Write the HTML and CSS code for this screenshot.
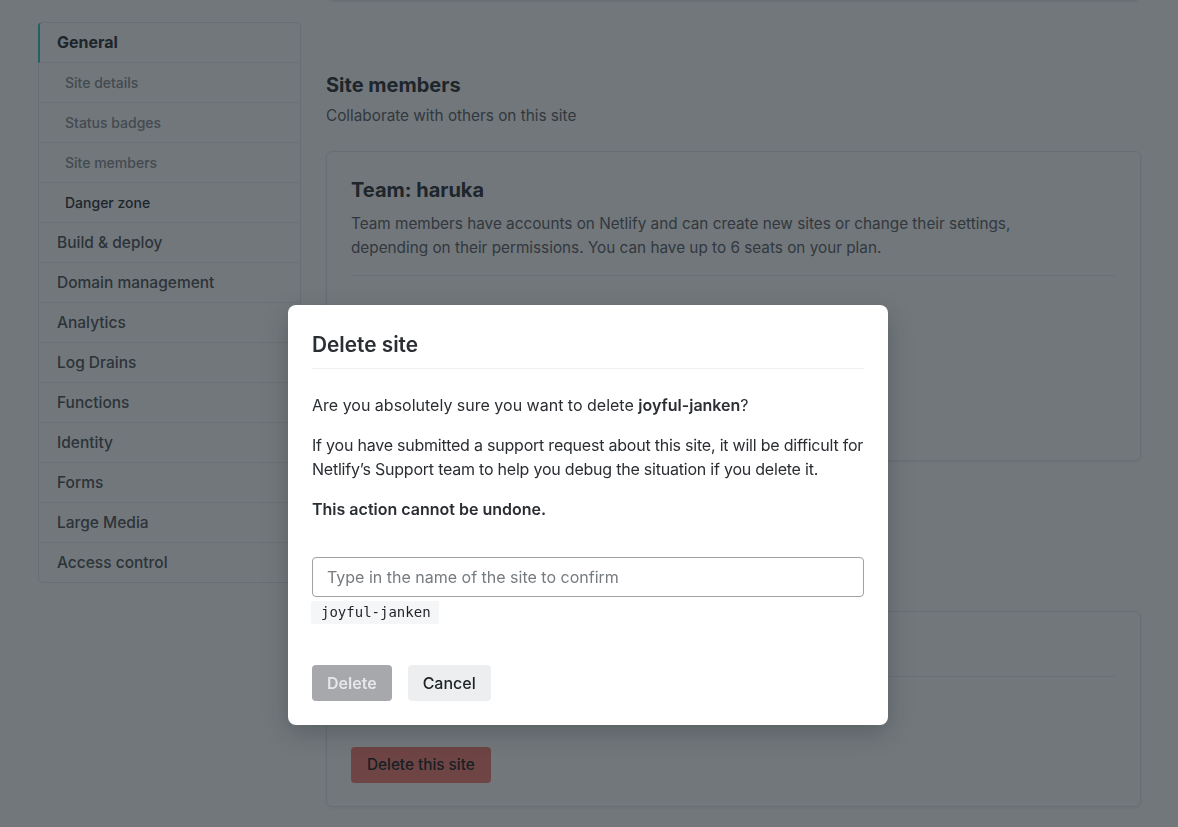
FILE: index.html
```html
<!DOCTYPE html>
<html lang="en">
<head>
<meta charset="utf-8">
<title>Site settings – Delete site</title>
<link rel="stylesheet" href="styles.css">
</head>
<body>
<div class="page">
  <aside class="sidebar">
    <nav class="nav">
      <div class="nav-item top active">General</div>
      <div class="nav-item sub">Site details</div>
      <div class="nav-item sub">Status badges</div>
      <div class="nav-item sub">Site members</div>
      <div class="nav-item sub current">Danger zone</div>
      <div class="nav-item top">Build &amp; deploy</div>
      <div class="nav-item top">Domain management</div>
      <div class="nav-item top">Analytics</div>
      <div class="nav-item top">Log Drains</div>
      <div class="nav-item top">Functions</div>
      <div class="nav-item top">Identity</div>
      <div class="nav-item top">Forms</div>
      <div class="nav-item top">Large Media</div>
      <div class="nav-item top last">Access control</div>
    </nav>
  </aside>
  <main class="main">
    <div class="card card-prev"></div>
    <section class="section">
      <h2 class="section-title">Site members</h2>
      <p class="section-sub">Collaborate with others on this site</p>
      <div class="card">
        <div class="card-head">
          <h3 class="card-title">Team: haruka</h3>
          <p class="card-text">Team members have accounts on Netlify and can create new sites or change their settings, depending on their permissions. You can have up to 6 seats on your plan.</p>
        </div>
        <div class="card-body members"></div>
      </div>
    </section>
    <section class="section">
      <h2 class="section-title">Danger zone</h2>
      <p class="section-sub">Delete this site permanently</p>
      <div class="card">
        <div class="card-head small">
          <h3 class="card-title">Delete site</h3>
        </div>
        <div class="card-body">
          <p class="card-text">Once you delete a site, there is no going back.</p>
          <button class="btn btn-danger" type="button">Delete this site</button>
        </div>
      </div>
    </section>
  </main>
</div>

<div class="overlay">
  <div class="modal" role="dialog" aria-labelledby="modal-title">
    <h2 class="modal-title" id="modal-title">Delete site</h2>
    <div class="modal-body">
      <p>Are you absolutely sure you want to delete <strong>joyful-janken</strong>?</p>
      <p class="warning">If you have submitted a support request about this site, it will be difficult for Netlify’s Support team to help you debug the situation if you delete it.</p>
      <p class="strong">This action cannot be undone.</p>
      <input class="confirm-input" type="text" placeholder="Type in the name of the site to confirm">
      <div class="code-row"><code class="code">joyful-janken</code></div>
      <div class="actions">
        <button class="btn btn-disabled" type="button">Delete</button>
        <button class="btn btn-secondary" type="button">Cancel</button>
      </div>
    </div>
  </div>
</div>
</body>
</html>
```

FILE: styles.css
```css
* { box-sizing: border-box; }

html, body {
  margin: 0;
  height: 100%;
  overflow: hidden;
}

body {
  font-family: Inter, "Noto Sans", "Liberation Sans", sans-serif;
  background: #ffffff;
  color: #2e3338;
  font-size: 16px;
  line-height: 24px;
}

.page {
  display: grid;
  grid-template-columns: 263px 815px;
  column-gap: 25px;
  padding-left: 38px;
  align-items: start;
}

/* Sidebar */
.sidebar {
  margin-top: 22px;
  border: 1px solid #e6e8ea;
  border-radius: 4px;
  background: #fff;
}

.nav { display: flex; flex-direction: column; }

.nav-item {
  height: 40px;
  display: flex;
  align-items: center;
  border-bottom: 1px solid #eceef0;
  padding-left: 18px;
  color: #50565b;
  font-weight: 500;
  font-size: 15.5px;
}

.nav-item.last { border-bottom: 0; height: 39px; }

.nav-item.active {
  margin-left: -1px;
  border-left: 2px solid #32c9c2;
  padding-left: 17px;
  padding-bottom: 2px;
  color: #2e3338;
  font-weight: 700;
  font-size: 16px;
  border-top-left-radius: 3px;
}

.nav-item.sub {
  padding-left: 26px;
  font-size: 14px;
  color: #8a8f94;
}

.nav-item.sub.current { color: #2e3338; }

/* Main */
.main { display: flex; flex-direction: column; }

.card {
  background: #fff;
  border: 1px solid #e6e8ea;
  border-radius: 6px;
  box-shadow: 0 1px 3px rgba(14, 30, 37, 0.08);
}

.card-prev {
  margin-top: -60px;
  height: 61px;
  margin-left: 2px;
  margin-right: 1px;
}

.section-title {
  margin: 70px 0 0;
  font-size: 20px;
  line-height: 28px;
  font-weight: 700;
  color: #2e3338;
}

.section-sub {
  margin: 5px 0 23px;
  font-size: 15.3px;
  line-height: 24px;
  color: #5d6368;
}

.card-head {
  margin: 0 24px;
  padding: 24px 0 15px;
  border-bottom: 1px solid #eceef0;
}

.card-head.small { padding-bottom: 12px; }

.card-title {
  margin: 0 0 8px;
  font-size: 20px;
  line-height: 28px;
  font-weight: 700;
  color: #2e3338;
}

.card-head.small .card-title { margin-bottom: 0; }

.card-text {
  margin: 0;
  color: #5d6368;
  font-size: 15.3px;
  line-height: 24px;
  max-width: 680px;
}

.card-body { padding: 16px 24px 23px; }

.card-body .card-text { margin-bottom: 30px; }

.members { height: 184px; }

/* Buttons */
.btn {
  height: 36px;
  padding: 0 15px;
  border: 0;
  border-radius: 4px;
  font-family: inherit;
  font-size: 16px;
  font-weight: 500;
  line-height: 36px;
  cursor: pointer;
}

.btn-danger {
  background: #f58275;
  color: #1d2328;
  font-size: 15.3px;
  padding: 0 16px;
}

.btn-disabled {
  background: #a6a8ab;
  color: #e6e7e9;
  font-weight: 600;
}

.btn-secondary {
  background: #eceef0;
  color: #1f2226;
}

/* Overlay + modal */
.overlay {
  position: fixed;
  inset: 0;
  background: rgba(20, 28, 35, 0.6);
  display: flex;
  justify-content: center;
  align-items: flex-start;
  padding-top: 305px;
  padding-right: 2px;
}

.modal {
  width: 600px;
  background: #fff;
  border-radius: 8px;
  padding: 26px 24px 24px;
  box-shadow: 0 8px 24px rgba(14, 30, 37, 0.25);
  color: #2a2e33;
}

.modal-title {
  margin: 0;
  font-size: 20.8px;
  line-height: 28px;
  font-weight: 600;
  padding-bottom: 9px;
  border-bottom: 1px solid #eff0f2;
}

.modal-body { padding-top: 24px; }

.modal-body p {
  margin: 0 0 16px;
  font-size: 16px;
  line-height: 24px;
}

.modal-body p.warning { letter-spacing: -0.22px; }

.modal-body p strong,
.modal-body p.strong { font-weight: 600; }

.modal-body p.strong { margin-bottom: 36px; }

.confirm-input {
  display: block;
  width: 100%;
  height: 40px;
  border: 1px solid #9ea2a6;
  border-radius: 4px;
  padding: 0 14px;
  font-family: inherit;
  font-size: 16px;
  color: #2e3338;
  background: #fff;
  outline: none;
}

.confirm-input::placeholder { color: #767b80; opacity: 1; }

.code-row {
  display: flex;
  margin-top: 4px;
  margin-left: -1px;
}

.code {
  display: block;
  height: 23px;
  line-height: 23px;
  padding: 0 8px 0 10px;
  background: #f5f6f7;
  border-radius: 2px;
  font-family: "DejaVu Sans Mono", "Liberation Mono", monospace;
  font-size: 14px;
  color: #1f2226;
}

.actions {
  display: flex;
  gap: 16px;
  margin-top: 41px;
}
```
